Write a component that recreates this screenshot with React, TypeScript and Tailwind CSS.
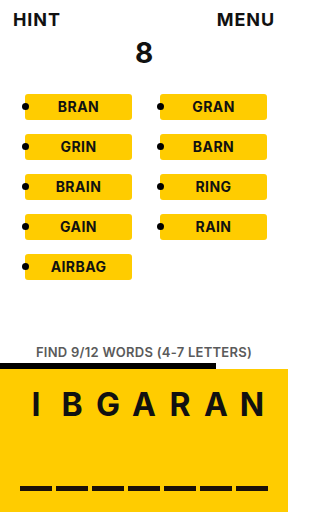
import React from "react";

const words = ["BRAN", "GRAN", "GRIN", "BARN", "BRAIN", "RING", "GAIN", "RAIN", "AIRBAG"];
const letters = ["I", "B", "G", "A", "R", "A", "N"];

function WordChip({ word }: { word: string }) {
  return (
    <div className="relative h-[26px] w-[107px] rounded-[3px] bg-[#ffcc00] flex items-center justify-center">
      <span className="absolute left-[-3px] top-[9.5px] h-[7px] w-[7px] rounded-full bg-black" />
      <span className="text-[14px] leading-none font-bold tracking-[0.03em] text-[#111]">{word}</span>
    </div>
  );
}

export default function App() {
  return (
    <div
      className="w-[288px] h-[512px] bg-white flex flex-col overflow-hidden"
      style={{ fontFamily: "Inter, 'Noto Sans', sans-serif" }}
    >
      <div className="flex justify-between items-start pt-[10.5px] pl-[13px] pr-[13px]">
        <span className="text-[18px] leading-none font-bold tracking-[0.05em] text-[#111]">HINT</span>
        <span className="text-[18px] leading-none font-bold tracking-[0.05em] text-[#111]">MENU</span>
      </div>

      <div className="mt-[10px] text-center text-[28px] leading-none font-bold text-[#111]">8</div>

      <div className="mt-[27px] ml-[25px] grid grid-cols-[107px_107px] gap-x-[28px] gap-y-[14px]">
        {words.map((w) => (
          <WordChip key={w} word={w} />
        ))}
      </div>

      <div className="mt-[66px] text-center text-[13px] leading-none font-semibold text-[#5a5a5a] tracking-[0.02em]">
        FIND 9/12 WORDS (4-7 LETTERS)
      </div>

      <div className="mt-[4px] h-[6px] w-[216px] bg-black" />

      <div className="flex-1 bg-[#ffcc00] flex flex-col">
        <div className="mt-[20px] ml-[20px] flex gap-[4px]">
          {letters.map((l, i) => (
            <div key={i} className="w-[32px] text-center text-[32px] leading-none font-bold text-[#111]">
              {l}
            </div>
          ))}
        </div>
        <div className="mt-[65px] ml-[20px] flex gap-[4px]">
          {letters.map((_, i) => (
            <div key={i} className="w-[32px] h-[5px] bg-[#1a1008]" />
          ))}
        </div>
      </div>
    </div>
  );
}
